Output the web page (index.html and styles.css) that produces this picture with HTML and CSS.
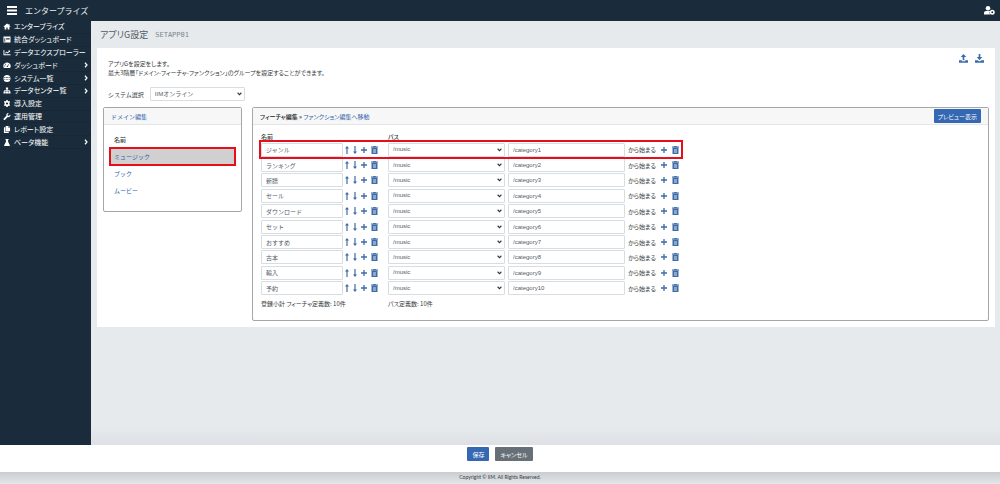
FILE: index.html
```html
<!DOCTYPE html>
<html lang="ja">
<head>
<meta charset="utf-8">
<meta name="viewport" content="width=device-width, initial-scale=1">
<title>アプリG設定</title>
<link rel="stylesheet" href="styles.css">
</head>
<body>
<svg class="sprite" aria-hidden="true">
  <symbol id="home" viewBox="0 0 16 16"><path d="M8 1 0 8l1.200 1.300L2.500 8.200V15h4v-4.500h3V15h4V8.200l1.300 1.100L16 8l-2.500-2.200V2h-2v2z"/></symbol>
  <symbol id="board" viewBox="0 0 16 16"><path fill-rule="evenodd" d="M0 1h16v14H0zM6 5v3h8V5zM2 5v8h2V5z"/></symbol>
  <symbol id="chart" viewBox="0 0 16 16"><path d="M0 2h2v10h14v2H0zM3.500 9 7 5.500l2.500 2L12 5l-1.500-1.500H15V8l-1.500-1.500-4 4L7 8.200 4.500 11z"/></symbol>
  <symbol id="gauge" viewBox="0 0 16 16"><path fill-rule="evenodd" d="M8 1a8 8 0 0 0-7 12.500h14A8 8 0 0 0 8 1zM7 11.500a1.500 1.500 0 0 1 1.500-2L11 5l1.200.6-2.300 4.500.1 1.400zM2 8h2v2H2zM4 4h2v2H4z"/></symbol>
  <symbol id="globe" viewBox="0 0 16 16"><path fill-rule="evenodd" d="M8 0a8 8 0 1 0 0 16A8 8 0 0 0 8 0zM1.500 5.200h3v1.400h-3zM6 5.200h4v1.400H6zM11.500 5.200h3v1.400h-3zM1.500 9.600h3V11h-3zM6 9.600h4V11H6zM11.500 9.600h3V11h-3z"/></symbol>
  <symbol id="tree" viewBox="0 0 16 16"><path d="M5.500 1h5v4.500H8.800V7H14v3.500h2V15h-5v-4.500h1.500v-2H8.800v2h1.700V15h-5v-4.500h1.700v-2H3.500v2H5V15H0v-4.500h2V7h5.200V5.500H5.500z"/></symbol>
  <symbol id="gear" viewBox="0 0 16 16"><path fill-rule="evenodd" d="M6.500 0h3l.5 2 1.500.8 2-.6 1.500 2.600L13.500 6.500v3l1.500 1.700-1.500 2.600-2-.6-1.500.8-.5 2h-3L6 14l-1.500-.8-2 .6L1 11.200l1.500-1.700v-3L1 4.800l1.500-2.600 2 .6L6 2zM8 5.500a2.500 2.500 0 1 0 0 5 2.500 2.500 0 0 0 0-5z"/></symbol>
  <symbol id="wrench" viewBox="0 0 16 16"><path d="M15.500 3.500 12.500 6.500 9.800 6l-.5-2.800L12 .4A4.500 4.500 0 0 0 6.700 6.300L.7 12.300a2 2 0 0 0 3 3l6-6a4.500 4.500 0 0 0 5.800-5.800z"/></symbol>
  <symbol id="copy" viewBox="0 0 16 16"><path d="M5 0h6v4h4v8H5zM12 0l3 3h-3zM1 3h3v10h8v3H1z"/></symbol>
  <symbol id="flask" viewBox="0 0 16 16"><path d="M4.500 0h7v2h-1v4l4 8q.5 2-1 2h-11q-1.500 0-1-2l4-8V2h-1z"/></symbol>
  <symbol id="chevron" viewBox="0 0 8 12"><path d="m2 1.500 4 4.500-4 4.500" fill="none" stroke="currentColor" stroke-width="2.400"/></symbol>
  <symbol id="menu" viewBox="0 0 10 9"><path d="M0 0h10v2H0zM0 3.500h10v2H0zM0 7h10v2H0z"/></symbol>
  <symbol id="user" viewBox="0 0 22 18"><circle cx="8" cy="4.500" r="4.500"/><path d="M0 17v-3q0-4 4-4h8q-2 3 0 7z"/><path fill-rule="evenodd" d="M16.500 7.500a5 5 0 1 0 0 10 5 5 0 0 0 0-10zm0 3.200a1.800 1.800 0 1 1 0 3.600 1.800 1.800 0 0 1 0-3.600z"/></symbol>
  <symbol id="upload" viewBox="0 0 16 16"><path d="m8 0 5 5.500H9.500V11h-3V5.500H3zM0 11h5v2h6v-2h5v4.500H0z"/></symbol>
  <symbol id="download" viewBox="0 0 16 16"><path d="m8 11 5-5.500H9.500V0h-3v5.500H3zM0 11h4.500L8 13.500 11.500 11H16v4.500H0z"/></symbol>
  <symbol id="up" viewBox="0 0 8 16"><path d="m4 0 4 5H5.200v11H2.800V5H0z"/></symbol>
  <symbol id="down" viewBox="0 0 8 16"><path d="m4 16 4-5H5.200V0H2.800v11H0z"/></symbol>
  <symbol id="plus" viewBox="0 0 12 12"><path d="M4.700 0h2.600v4.700H12v2.600H7.300V12H4.700V7.300H0V4.700h4.700z"/></symbol>
  <symbol id="trash" viewBox="0 0 14 16"><path fill-rule="evenodd" d="M0 1h4l1-1h4l1 1h4v2H0zM1 3.500h12V16H1zM4 6v8h.8V6zM6.600 6v8h.8V6zM9.200 6v8h.8V6z"/></symbol>
</svg>

<header class="topbar">
  <button class="icon-button" type="button" aria-label="メニュー"><svg class="menu-icon"><use href="#menu"/></svg></button>
  <span class="brand">エンタープライズ</span>
  <button class="icon-button account" type="button" aria-label="アカウント"><svg class="user-icon"><use href="#user"/></svg></button>
</header>

<div class="shell">
  <nav class="sidebar">
    <ul class="menu">
      <li><a href="#"><svg><use href="#home"/></svg>エンタープライズ</a></li>
      <li><a href="#"><svg><use href="#board"/></svg>統合ダッシュボード</a></li>
      <li><a href="#"><svg><use href="#chart"/></svg>データエクスプローラー</a></li>
      <li><a href="#"><svg><use href="#gauge"/></svg>ダッシュボード<svg class="chevron"><use href="#chevron"/></svg></a></li>
      <li><a href="#"><svg><use href="#globe"/></svg>システム一覧<svg class="chevron"><use href="#chevron"/></svg></a></li>
      <li><a href="#"><svg><use href="#tree"/></svg>データセンター覧<svg class="chevron"><use href="#chevron"/></svg></a></li>
      <li><a href="#"><svg><use href="#gear"/></svg>導入設定</a></li>
      <li><a href="#"><svg><use href="#wrench"/></svg>運用管理</a></li>
      <li><a href="#"><svg><use href="#copy"/></svg>レポート設定</a></li>
      <li><a href="#"><svg><use href="#flask"/></svg>ベータ機能<svg class="chevron"><use href="#chevron"/></svg></a></li>
    </ul>
  </nav>

  <main class="main">
    <div class="heading"><h1>アプリG設定</h1><span class="code">SETAPP01</span></div>
    <section class="card">
      <div class="intro">
        <p>アプリGを設定をします。<br>最大3階層「ドメイン-フィーチャ-ファンクション」のグループを設定することができます。</p>
        <div class="transfer">
          <button class="icon-button" type="button" aria-label="アップロード"><svg><use href="#upload"/></svg></button>
          <button class="icon-button" type="button" aria-label="ダウンロード"><svg><use href="#download"/></svg></button>
        </div>
      </div>
      <div class="system">
        <label for="system">システム選択</label>
        <select id="system" class="field"><option>IIMオンライン</option></select>
      </div>
      <div class="panels">
        <section class="panel">
          <header class="panel-head"><a class="wide" href="#">ドメイン編集</a></header>
          <div class="domains">
            <h2>名前</h2>
            <a class="domain selected" href="#">ミュージック</a>
            <a class="domain" href="#">ブック</a>
            <a class="domain" href="#">ムービー</a>
          </div>
        </section>
        <section class="panel">
          <header class="panel-head"><span><b>フィーチャ編集 » </b><a href="#">ファンクション編集へ移動</a></span><button class="button primary" type="button">プレビュー表示</button></header>
          <div class="features">
            <table class="feature-table">
              <thead><tr><th>名前</th><th></th><th>パス</th></tr></thead>
              <tbody id="rows"></tbody>
              <tfoot><tr><td class="total">登録小計 フィーチャ定義数: 10件</td><td>パス定義数: 10件</td></tr></tfoot>
            </table>
          </div>
        </section>
      </div>
    </section>
  </main>
</div>

<div class="actions">
  <button class="button primary" type="button">保存</button>
  <button class="button secondary" type="button">キャンセル</button>
</div>
<footer class="copyright">Copyright © IIM. All Rights Reserved.</footer>
<script src="script.js"></script>
</body>
</html>
```
FILE: styles.css
```css
* { box-sizing: border-box; }

body {
  margin: 0;
  min-height: 100vh;
  display: flex;
  flex-direction: column;
  background: #fff;
  color: #35393d;
  font-family: "Noto Sans CJK JP", sans-serif;
  font-feature-settings: "palt";
  font-size: 6px;
  line-height: 9px;
}

a { color: #2c62ab; text-decoration: none; }
h1, h2, p, ul { margin: 0; padding: 0; }
svg { fill: currentColor; }
.sprite { display: none; }

button, input, select {
  font: inherit;
  color: inherit;
}

.icon-button {
  display: flex;
  padding: 0;
  border: 0;
  background: none;
  color: #3d6ba8;
}

.topbar {
  display: flex;
  align-items: center;
  height: 21px;
  padding: 0 5px 0 7px;
  background: #1a2c3b;
  color: #eef1f3;
}
.topbar .icon-button { color: #fff; }
.topbar .account { margin-left: auto; }
.menu-icon { width: 10px; height: 9px; }
.user-icon { width: 11px; height: 9px; }
.brand { margin-left: 8px; font-size: 8px; }
.brand, .system, .domain, .wide, .field { font-feature-settings: normal; }

.shell { flex: 1; display: flex; }

.sidebar { flex: 0 0 91px; background: #1a2c3b; }
.menu {
  display: grid;
  grid-auto-rows: 1fr;
  height: 128px;
  list-style: none;
  font-size: 7px;
}
.menu li { border-bottom: 1px solid #182735; }
.menu a {
  display: flex;
  align-items: center;
  height: 100%;
  padding: 0 3px;
  color: #fff;
  white-space: nowrap;
}
.menu svg { flex: none; width: 8px; height: 7px; margin-right: 3px; }
.menu .chevron { width: 4px; height: 6px; margin: 0 0 0 auto; }

.main {
  flex: 1;
  min-width: 0;
  padding: 0 5px 0 6px;
  background: linear-gradient(#e6eaed calc(100% - 18px), #dde1e5);
}
.heading {
  display: flex;
  align-items: center;
  gap: 7px;
  height: 27px;
  padding-left: 3px;
  color: #535b62;
}
.heading h1 { font-size: 9px; font-weight: 400; }
.code { font: 7px "DejaVu Sans Mono", monospace; color: #7c858c; }

.card { padding: 6px 6px 6px; background: #fff; }
.intro { display: flex; justify-content: space-between; padding: 0 5px; }
.intro p { padding-top: 5px; }
.transfer { display: flex; align-items: flex-start; gap: 7px; }
.transfer svg { width: 9px; height: 9px; }

.system { display: flex; align-items: center; gap: 6px; padding: 10px 5px 6px; }
.field {
  display: block;
  width: 100%;
  height: 14px;
  padding: 0 4px;
  border: 1px solid #d8dde1;
  border-radius: 1px;
  background: #fff;
  color: #555c63;
  font-family: "Liberation Sans", "Noto Sans CJK JP", sans-serif;
}
select.field {
  appearance: none;
  background: #fff url("data:image/svg+xml,%3Csvg xmlns='http://www.w3.org/2000/svg' viewBox='0 0 8 6'%3E%3Cpath d='m1 1 3 3 3-3' fill='none' stroke='%23333' stroke-width='1.700'/%3E%3C/svg%3E") no-repeat right 2px center / 5px 4px;
}
.system .field { width: 95px; }

.panels {
  display: grid;
  grid-template-columns: 139px 1fr;
  align-items: start;
  gap: 10px;
}
.panel { border: 1px solid #a4a6a8; border-radius: 2px; }
.panel-head {
  display: flex;
  align-items: center;
  justify-content: space-between;
  height: 17px;
  padding: 0 7px;
  border-bottom: 1px solid #e4e5e6;
  background: #f7f7f7;
}
.panel-head b { font-weight: 500; color: #222; }

.domains { padding: 10px 6px 12px; }
.domains h2 { padding: 0 4px 4px; font-size: 6px; font-weight: 500; }
.domain {
  display: block;
  padding: 4px;
}
.domain.selected {
  outline: 2px solid #e60f19;
  outline-offset: -1px;
  background: #d0d0d0;
}

.button {
  padding: 0 4px;
  height: 14px;
  border: 0;
  border-radius: 1px;
  color: #fff;
}
.primary { background: #3568b2; }
.secondary { background: #687077; }

.features { padding: 7px 8px 12px; }
.feature-table, .feature-table thead, .feature-table tfoot { display: block; }
.feature-table tr {
  display: grid;
  grid-template-columns: 82px 45px 117px 120px 54px;
  align-items: center;
}
.feature-table tbody { display: grid; grid-auto-rows: 1fr; height: 154px; }
.feature-table thead { padding-bottom: 1px; }
.feature-table th, .feature-table td { padding: 0; text-align: left; }
.feature-table th { font-weight: 500; }
.feature-table tfoot { padding-top: 3px; }
.feature-table .total { grid-column: span 2; }
.feature-table tbody tr:first-child {
  position: relative;
  z-index: 1;
  width: 420px;
  outline: 2px solid #e60f19;
}
.feature-table .path { padding-left: 3px; }
.tools { display: flex; align-items: center; }
.feature-table .order { justify-content: space-between; padding: 0 10px 0 2px; }
.feature-table .match { justify-content: space-between; padding-left: 3px; }
.arrow { width: 4px; height: 8px; }
.plus { width: 6px; height: 6px; }
.trash { width: 7px; height: 8px; }

.actions {
  display: flex;
  justify-content: center;
  gap: 6px;
  padding: 2px 0 11px;
}
.actions .button { padding: 0 5px; font-feature-settings: "palt"; }
.copyright {
  height: 12px;
  padding-top: 1px;
  background: linear-gradient(#c9cdd1, #e4e6e9);
  font-family: Lato, sans-serif;
  font-size: 5px;
  text-align: center;
}
```
FILE: script.js
```js
const names = ["ジャンル", "ランキング", "新譜", "セール", "ダウンロード", "セット", "おすすめ", "古本", "輸入", "予約"];
const button = (label, icon, cls) =>
  `<button class="icon-button" type="button" aria-label="${label}"><svg class="${cls}"><use href="#${icon}"/></svg></button>`;

document.getElementById("rows").innerHTML = names.map((name, i) => `
  <tr>
    <td><input class="field" aria-label="名前" value="${name}"></td>
    <td class="tools order">
      ${button("上へ", "up", "arrow")}${button("下へ", "down", "arrow")}${button("追加", "plus", "plus")}${button("削除", "trash", "trash")}
    </td>
    <td><select class="field" aria-label="パス"><option>/music</option></select></td>
    <td class="path"><input class="field" aria-label="カテゴリ" value="/category${i + 1}"></td>
    <td class="tools match"><span>から始まる</span>${button("追加", "plus", "plus")}${button("削除", "trash", "trash")}</td>
  </tr>`).join("");
```
